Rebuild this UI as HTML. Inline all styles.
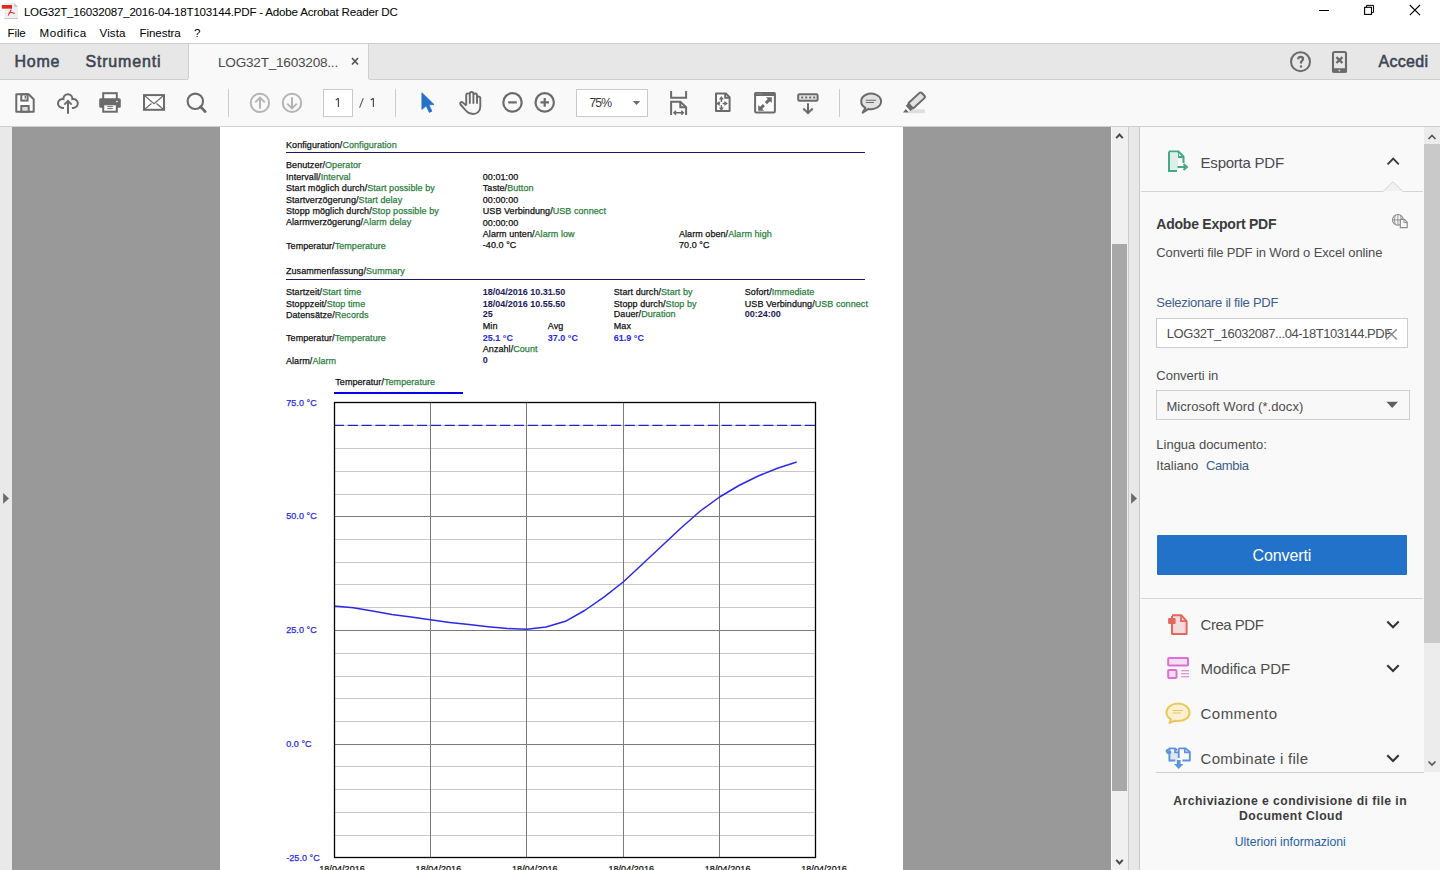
<!DOCTYPE html>
<html><head><meta charset="utf-8"><title>Acrobat</title>
<style>
html,body{margin:0;padding:0;}
body{width:1440px;height:870px;overflow:hidden;position:relative;background:#fff;font-family:"Liberation Sans",sans-serif;}
.t{position:absolute;white-space:nowrap;line-height:1;}
.r{position:absolute;display:block;}
</style></head><body>
<div class="r" style="left:0px;top:0px;width:1440px;height:43px;background:#fff;"></div>
<svg class="r" style="left:0px;top:0px" width="20" height="21" viewBox="0 0 20 21">
<path d="M4.4 3 H14.2 L18 6.8 V19 H4.4 Z" fill="#edf0f3"/>
<path d="M4.4 18.6 H18" stroke="#bdbdbd" stroke-width="0.9"/>
<path d="M14.2 3 L18 6.8 H14.2 Z" fill="#c4c4c4"/>
<rect x="1.8" y="5" width="10.2" height="3.7" fill="#e8261c"/>
<path d="M8.2 15.4 L11.3 9.6 M9.6 12.6 C11.5 12.2 13 12.6 14.8 13.5" fill="none" stroke="#e8261c" stroke-width="1.1"/>
</svg>
<div class="t" style="left:23.90px;top:6.00px;font-size:11.6px;color:#000;letter-spacing:-0.216px;">LOG32T_16032087_2016-04-18T103144.PDF - Adobe Acrobat Reader DC</div>
<div class="r" style="left:1319px;top:10px;width:10px;height:1px;background:#000;"></div>
<svg class="r" style="left:1360px;top:2px" width="20" height="16" viewBox="0 0 20 16">
<path d="M6.5 5.3 V3.4 H13.5 V10.4 H11.6" fill="none" stroke="#000" stroke-width="1"/>
<rect x="4.6" y="5.3" width="6.9" height="7.1" fill="none" stroke="#000" stroke-width="1.1"/>
</svg>
<svg class="r" style="left:1405px;top:1px" width="20" height="18" viewBox="0 0 20 18">
<path d="M4.8 4 L15 14.2 M15 4 L4.8 14.2" stroke="#000" stroke-width="1.1"/>
</svg>
<div class="t" style="left:7.60px;top:27.00px;font-size:11.6px;color:#000;letter-spacing:-0.173px;">File</div>
<div class="t" style="left:39.60px;top:27.00px;font-size:11.6px;color:#000;letter-spacing:0.476px;">Modifica</div>
<div class="t" style="left:99.60px;top:27.00px;font-size:11.6px;color:#000;letter-spacing:0.084px;">Vista</div>
<div class="t" style="left:139.60px;top:27.00px;font-size:11.6px;color:#000;letter-spacing:-0.113px;">Finestra</div>
<div class="t" style="left:194.00px;top:27.00px;font-size:11.6px;color:#000;letter-spacing:-0.452px;">?</div>
<div class="r" style="left:0px;top:43px;width:1440px;height:1px;background:#cdcdcd;"></div>
<div class="r" style="left:0px;top:44px;width:1440px;height:35px;background:#e7e7e7;"></div>
<div class="r" style="left:0px;top:79px;width:1440px;height:1px;background:#cfcfcf;"></div>
<div class="r" style="left:188px;top:44px;width:181px;height:36px;background:#f9f9f9;"></div>
<div class="r" style="left:188px;top:44px;width:1px;height:35px;background:#cfcfcf;"></div>
<div class="r" style="left:368px;top:44px;width:1px;height:35px;background:#cfcfcf;"></div>
<div class="t" style="left:14.60px;top:54.00px;font-size:16px;color:#3b4550;letter-spacing:0.680px;-webkit-text-stroke:0.55px currentColor;">Home</div>
<div class="t" style="left:85.40px;top:54.00px;font-size:16px;color:#3b4550;letter-spacing:0.837px;-webkit-text-stroke:0.55px currentColor;">Strumenti</div>
<div class="t" style="left:218.00px;top:56.00px;font-size:13.6px;color:#4b4b4b;letter-spacing:-0.235px;">LOG32T_1603208...</div>
<svg class="r" style="left:350px;top:57px" width="10" height="9" viewBox="0 0 10 9">
<path d="M2 1 L8 7.5 M8 1 L2 7.5" stroke="#555" stroke-width="1.7"/></svg>
<svg class="r" style="left:1289px;top:50px" width="24" height="24" viewBox="0 0 24 24">
<circle cx="11.5" cy="11.7" r="9.5" fill="none" stroke="#6a6a6a" stroke-width="2"/>
<path d="M9.2 9.3 C9.2 7.6 10.2 6.9 11.6 6.9 C13 6.9 14 7.7 14 9 C14 10.6 12 10.9 12 12.6 V13.4" fill="none" stroke="#6a6a6a" stroke-width="2.3"/>
<rect x="10.9" y="15.4" width="2.2" height="2.2" fill="#6a6a6a"/></svg>
<svg class="r" style="left:1331px;top:50px" width="18" height="24" viewBox="0 0 18 24">
<rect x="2" y="2" width="13" height="19.6" rx="1.6" fill="none" stroke="#6a6a6a" stroke-width="2.1"/>
<rect x="1" y="18.2" width="15" height="4.6" rx="1" fill="#6a6a6a"/>
<rect x="7.7" y="19.8" width="1.5" height="1.5" fill="#e7e7e7"/>
<path d="M5.4 7.2 L11.4 13 M11.4 7.2 L5.4 13" stroke="#6a6a6a" stroke-width="2.4"/></svg>
<div class="t" style="left:1378.60px;top:54.00px;font-size:16px;color:#3b4550;letter-spacing:0.263px;-webkit-text-stroke:0.55px currentColor;">Accedi</div>
<div class="r" style="left:0px;top:80px;width:1440px;height:46px;background:#f9f9f9;"></div>
<div class="r" style="left:0px;top:126px;width:1440px;height:1px;background:#cfcfcf;"></div>
<svg class="r" style="left:10px;top:88px" width="30" height="30" viewBox="10 88 30 30"><path d="M16.3 94.3 H28.6 L33.7 99.2 V111.7 H16.3 Z" fill="#fff" stroke="#6b6b6b" stroke-width="2" stroke-linejoin="round"/>
<rect x="21.3" y="94.3" width="6.3" height="6.3" fill="none" stroke="#6b6b6b" stroke-width="2"/>
<rect x="24.6" y="95.8" width="1.4" height="2.8" fill="#6b6b6b"/>
<rect x="21.3" y="106" width="7.4" height="5.7" fill="#dcdcdc" stroke="#6b6b6b" stroke-width="2"/></svg>
<svg class="r" style="left:52px;top:88px" width="32" height="30" viewBox="52 88 32 30"><path d="M64 107.9 H62.45 A4.45 4.45 0 1 1 63.42 99.11 A4.5 4.5 0 1 1 72.38 99.11 A4.45 4.45 0 1 1 73.35 107.9 H71.9" fill="none" stroke="#6b6b6b" stroke-width="2"/>
<path d="M68 113.8 V101 M64.3 104.6 L68 100.9 L71.7 104.6" fill="none" stroke="#6b6b6b" stroke-width="2"/></svg>
<svg class="r" style="left:95px;top:88px" width="30" height="30" viewBox="95 88 30 30"><rect x="103.2" y="93.2" width="13.6" height="7" fill="#fff" stroke="#6b6b6b" stroke-width="2"/>
<rect x="99.2" y="98.3" width="21.6" height="9.4" rx="1.5" fill="#6b6b6b"/>
<rect x="116" y="100.9" width="2" height="1.2" fill="#ddd"/>
<rect x="103.2" y="104.3" width="13.6" height="7.4" fill="#fff" stroke="#6b6b6b" stroke-width="2"/>
<path d="M107.2 106.6 H112.8 M107.2 108.6 H112.8" stroke="#6b6b6b" stroke-width="1"/></svg>
<svg class="r" style="left:140px;top:88px" width="30" height="30" viewBox="140 88 30 30"><rect x="144" y="95.1" width="20" height="14.7" fill="#fff" stroke="#6b6b6b" stroke-width="2"/>
<path d="M145 96 L154 103.8 L163 96 M145 109 L151.5 103.5 M163 109 L156.5 103.5" fill="none" stroke="#6b6b6b" stroke-width="1.2"/></svg>
<svg class="r" style="left:182px;top:88px" width="30" height="30" viewBox="182 88 30 30"><circle cx="195.3" cy="101.3" r="7.7" fill="none" stroke="#6b6b6b" stroke-width="2.1"/>
<path d="M200.6 106.8 L205.2 111.6" stroke="#6b6b6b" stroke-width="2.8" stroke-linecap="round"/></svg>
<div class="r" style="left:228px;top:89px;width:1px;height:28px;background:#cccccc;"></div>
<svg class="r" style="left:245px;top:88px" width="65" height="30" viewBox="245 88 65 30"><circle cx="259.9" cy="102.9" r="9.2" fill="none" stroke="#b4b4b4" stroke-width="2"/>
<path d="M260 108.8 V97.8 M255.2 102.4 L260 97.6 L264.8 102.4" fill="none" stroke="#b4b4b4" stroke-width="2"/>
<circle cx="292" cy="102.9" r="9.2" fill="none" stroke="#b4b4b4" stroke-width="2"/>
<path d="M292 97.2 V108.2 M287.2 103.6 L292 108.4 L296.8 103.6" fill="none" stroke="#b4b4b4" stroke-width="2"/></svg>
<div class="r" style="left:323px;top:89px;width:30px;height:28px;background:#fff;box-sizing:border-box;border:1px solid #c9c9c9;"></div>
<svg class="r" style="left:330px;top:94px" width="50" height="16" viewBox="330 94 50 16"><path d="M338.4 98.3 V107 M338.4 98.3 L335.8 100" fill="none" stroke="#454545" stroke-width="1.15"/><path d="M359.6 107.6 L363.3 98.2" stroke="#555" stroke-width="1.1"/><path d="M373.4 98.3 V107 M373.4 98.3 L370.8 100" fill="none" stroke="#454545" stroke-width="1.15"/></svg>
<div class="r" style="left:395px;top:89px;width:1px;height:28px;background:#cccccc;"></div>
<svg class="r" style="left:415px;top:88px" width="25" height="30" viewBox="415 88 25 30"><path d="M421.9 92.7 V109.4 L426.2 105.8 L429.3 112.4 L431.9 111.2 L428.9 104.8 L434 104.5 Z" fill="#2671c9" stroke="#2671c9" stroke-width="0.8" stroke-linejoin="round"/></svg>
<svg class="r" style="left:455px;top:88px" width="30" height="30" viewBox="455 88 30 30"><path d="M466.2 105.5 V95.2 A1.8 1.8 0 0 1 469.8 95.2 V103 V93.8 A1.8 1.8 0 0 1 473.4 93.8 V103 V95.3 A1.8 1.8 0 0 1 477 95.3 V103 V97.6 A1.8 1.8 0 0 1 480.3 97.6 V106.5 C480.3 111.5 477 114 473 114 C469.5 114 467.5 112.5 465.8 110.5 L460.5 104.5 C459.5 103.2 460.8 101.4 462.6 102.4 L466.2 105.5" fill="none" stroke="#6b6b6b" stroke-width="1.9" stroke-linejoin="round"/></svg>
<svg class="r" style="left:500px;top:88px" width="60" height="30" viewBox="500 88 60 30"><circle cx="512.5" cy="102.4" r="9.2" fill="none" stroke="#6b6b6b" stroke-width="2.2"/>
<path d="M508.2 102.4 H516.8" stroke="#6b6b6b" stroke-width="2.2"/>
<circle cx="544.7" cy="102.4" r="9.2" fill="none" stroke="#6b6b6b" stroke-width="2.2"/>
<path d="M540.4 102.4 H549 M544.7 98.1 V106.7" stroke="#6b6b6b" stroke-width="2.2"/></svg>
<div class="r" style="left:576px;top:89px;width:72px;height:28px;background:#fff;box-sizing:border-box;border:1px solid #c9c9c9;"></div>
<div class="t" style="left:589.40px;top:97.00px;font-size:12.2px;color:#3a3a3a;letter-spacing:-0.906px;">75%</div>
<svg class="r" style="left:630px;top:98px" width="12" height="9" viewBox="630 98 12 9"><path d="M632.8 101 H640.2 L636.5 105.1 Z" fill="#6b6b6b"/></svg>
<svg class="r" style="left:665px;top:88px" width="28" height="30" viewBox="665 88 28 30"><path d="M671.1 91 V97.8 H686.1 V91" fill="none" stroke="#6b6b6b" stroke-width="2"/>
<path d="M671.1 114.9 V101.8 H680.3 L686.1 107.3 V114.9" fill="none" stroke="#6b6b6b" stroke-width="2"/>
<path d="M680.3 101.8 V107.3 H686.1" fill="none" stroke="#6b6b6b" stroke-width="2"/>
<path d="M674 112.7 H683.3 M676 110.7 L674 112.7 L676 114.7 M681.3 110.7 L683.3 112.7 L681.3 114.7" fill="none" stroke="#6b6b6b" stroke-width="1.5"/></svg>
<svg class="r" style="left:710px;top:88px" width="26" height="30" viewBox="710 88 26 30"><path d="M716 93.4 H725.8 L729.6 97.2 V111.1 H716 Z" fill="#fff" stroke="#6b6b6b" stroke-width="2" stroke-linejoin="round"/>
<path d="M725.2 93.4 V97.8 H729.6" fill="none" stroke="#6b6b6b" stroke-width="2"/>
<path d="M721.4 99 V102 M721.4 105 V108 M718.8 103.5 H720.2 M722.6 103.5 H725" stroke="#6b6b6b" stroke-width="1.5"/>
<path d="M718.9 99.6 L721.4 96.1 L723.9 99.6 Z M718.9 107.4 L721.4 110.9 L723.9 107.4 Z M719.6 101 L716.1 103.5 L719.6 106 Z M724.4 101 L727.9 103.5 L724.4 106 Z" fill="#6b6b6b"/></svg>
<svg class="r" style="left:750px;top:88px" width="30" height="30" viewBox="750 88 30 30"><rect x="755.1" y="93.1" width="19.8" height="19.4" rx="1.3" fill="#fff" stroke="#6b6b6b" stroke-width="2"/>
<rect x="754.4" y="92.2" width="21.2" height="3.8" rx="1.2" fill="#6b6b6b"/>
<path d="M756.6 93.9 H757.6 M758.6 93.9 H759.6 M760.6 93.9 H761.6" stroke="#c4c4c4" stroke-width="0.8"/>
<path d="M769.4 99.6 L765.9 103.1 M760.4 108.6 L763.9 105.1" stroke="#6b6b6b" stroke-width="3"/>
<path d="M765.9 97.2 H771.8 V103.1 Z M758.2 104.9 V110.8 H764.1 Z" fill="#6b6b6b"/></svg>
<svg class="r" style="left:793px;top:88px" width="30" height="30" viewBox="793 88 30 30"><rect x="798.2" y="94.2" width="19.4" height="6.6" rx="1.2" fill="#e4e4e4" stroke="#6b6b6b" stroke-width="2"/>
<path d="M801.2 97.4 H803.2 M805.2 97.4 H807.2 M809.2 97.4 H811.2 M813.2 97.4 H815.2" stroke="#6b6b6b" stroke-width="2"/>
<path d="M808 103.2 V113 M803.3 108.5 L808 113.2 L812.7 108.5" fill="none" stroke="#6b6b6b" stroke-width="2"/></svg>
<div class="r" style="left:839px;top:89px;width:1px;height:28px;background:#cccccc;"></div>
<svg class="r" style="left:855px;top:88px" width="32" height="30" viewBox="855 88 32 30"><path d="M865.5 107.8 A9.95 7.8 0 1 1 868.5 108.9 L862.7 112.6 Z" fill="#e2e2e2" stroke="#6b6b6b" stroke-width="2" stroke-linejoin="round"/>
<path d="M865.8 100.2 H876 M865.8 102.5 H874" stroke="#6b6b6b" stroke-width="1.1"/></svg>
<svg class="r" style="left:900px;top:88px" width="28" height="30" viewBox="900 88 28 30"><rect x="909" y="109.3" width="15.7" height="3.9" fill="#dedede"/>
<g transform="translate(915.8,101.2) rotate(-43)">
<rect x="-7.5" y="-3.6" width="17.5" height="7.2" rx="2" fill="#e2e2e2" stroke="#6b6b6b" stroke-width="2"/>
<rect x="-10.5" y="-3.6" width="4.5" height="7.2" fill="#6b6b6b"/>
</g>
<path d="M903 112.6 L905.8 109 L909 112.6 Z" fill="#6b6b6b"/></svg>
<div class="r" style="left:0px;top:127px;width:12px;height:743px;background:#e9e9e9;"></div>
<svg class="r" style="left:0px;top:488px" width="12" height="20" viewBox="0 488 12 20"><path d="M3.1 493 L9 498.4 L3.1 503.8 Z" fill="#6b6b6b"/></svg>
<div class="r" style="left:12px;top:127px;width:1099px;height:743px;background:#999999;"></div>
<div class="r" style="left:220px;top:127px;width:683px;height:743px;background:#ffffff;"></div>
<div class="r" style="left:1111px;top:127px;width:17px;height:743px;background:#f0f0f0;"></div>
<div class="r" style="left:1111px;top:127px;width:1px;height:743px;background:#fafafa;"></div>
<div class="r" style="left:1112px;top:244px;width:15px;height:547px;background:#a8a8a8;"></div>
<svg class="r" style="left:1111px;top:127px" width="17" height="18" viewBox="1111 127 17 18"><path d="M1116.2 138.2 L1119.5 134.5 L1122.8 138.2" fill="none" stroke="#4a4a4a" stroke-width="2"/></svg>
<svg class="r" style="left:1111px;top:852px" width="17" height="18" viewBox="1111 852 17 18"><path d="M1116.2 859.8 L1119.5 863.5 L1122.8 859.8" fill="none" stroke="#4a4a4a" stroke-width="2"/></svg>
<div class="r" style="left:1128px;top:127px;width:1px;height:743px;background:#cacaca;"></div>
<div class="r" style="left:1129px;top:127px;width:10px;height:743px;background:#e8e8e8;"></div>
<svg class="r" style="left:1129px;top:488px" width="11" height="20" viewBox="1129 488 11 20"><path d="M1131.1 493 L1137 498.4 L1131.1 503.8 Z" fill="#6b6b6b"/></svg>
<div class="r" style="left:1139px;top:127px;width:1px;height:743px;background:#c8c8c8;"></div>
<div class="r" style="left:1140px;top:127px;width:300px;height:743px;background:#f9f9f9;"></div>
<div class="t" style="left:286.00px;top:141.00px;font-size:9px;color:#111;-webkit-text-stroke:0.25px currentColor;letter-spacing:0.06px;">Konfiguration/<span style="color:#2e8040">Configuration</span></div>
<div class="r" style="left:286px;top:152px;width:579px;height:1px;background:#1a1a5a;height:1.4px;"></div>
<div class="t" style="left:286.00px;top:161.00px;font-size:9px;color:#111;-webkit-text-stroke:0.25px currentColor;letter-spacing:0.06px;">Benutzer/<span style="color:#2e8040">Operator</span></div>
<div class="t" style="left:286.00px;top:173.00px;font-size:9px;color:#111;-webkit-text-stroke:0.25px currentColor;letter-spacing:0.06px;">Intervall/<span style="color:#2e8040">Interval</span></div>
<div class="t" style="left:286.00px;top:184.00px;font-size:9px;color:#111;-webkit-text-stroke:0.25px currentColor;letter-spacing:0.06px;">Start möglich durch/<span style="color:#2e8040">Start possible by</span></div>
<div class="t" style="left:286.00px;top:196.00px;font-size:9px;color:#111;-webkit-text-stroke:0.25px currentColor;letter-spacing:0.06px;">Startverzögerung/<span style="color:#2e8040">Start delay</span></div>
<div class="t" style="left:286.00px;top:207.00px;font-size:9px;color:#111;-webkit-text-stroke:0.25px currentColor;letter-spacing:0.06px;">Stopp möglich durch/<span style="color:#2e8040">Stop possible by</span></div>
<div class="t" style="left:286.00px;top:218.00px;font-size:9px;color:#111;-webkit-text-stroke:0.25px currentColor;letter-spacing:0.06px;">Alarmverzögerung/<span style="color:#2e8040">Alarm delay</span></div>
<div class="t" style="left:286.00px;top:242.00px;font-size:9px;color:#111;-webkit-text-stroke:0.25px currentColor;letter-spacing:0.06px;">Temperatur/<span style="color:#2e8040">Temperature</span></div>
<div class="t" style="left:482.80px;top:173.00px;font-size:9px;color:#111;-webkit-text-stroke:0.25px currentColor;letter-spacing:0.06px;">00:01:00</div>
<div class="t" style="left:482.80px;top:184.00px;font-size:9px;color:#111;-webkit-text-stroke:0.25px currentColor;letter-spacing:0.06px;">Taste/<span style="color:#2e8040">Button</span></div>
<div class="t" style="left:482.80px;top:196.00px;font-size:9px;color:#111;-webkit-text-stroke:0.25px currentColor;letter-spacing:0.06px;">00:00:00</div>
<div class="t" style="left:482.80px;top:207.00px;font-size:9px;color:#111;-webkit-text-stroke:0.25px currentColor;letter-spacing:0.06px;">USB Verbindung/<span style="color:#2e8040">USB connect</span></div>
<div class="t" style="left:482.80px;top:219.00px;font-size:9px;color:#111;-webkit-text-stroke:0.25px currentColor;letter-spacing:0.06px;">00:00:00</div>
<div class="t" style="left:482.80px;top:230.00px;font-size:9px;color:#111;-webkit-text-stroke:0.25px currentColor;letter-spacing:0.06px;">Alarm unten/<span style="color:#2e8040">Alarm low</span></div>
<div class="t" style="left:482.80px;top:241.00px;font-size:9px;color:#111;-webkit-text-stroke:0.25px currentColor;letter-spacing:0.06px;">-40.0 °C</div>
<div class="t" style="left:679.00px;top:230.00px;font-size:9px;color:#111;-webkit-text-stroke:0.25px currentColor;letter-spacing:0.06px;">Alarm oben/<span style="color:#2e8040">Alarm high</span></div>
<div class="t" style="left:679.00px;top:241.00px;font-size:9px;color:#111;-webkit-text-stroke:0.25px currentColor;letter-spacing:0.06px;">70.0 °C</div>
<div class="t" style="left:286.00px;top:267.00px;font-size:9px;color:#111;-webkit-text-stroke:0.25px currentColor;letter-spacing:0.06px;">Zusammenfassung/<span style="color:#2e8040">Summary</span></div>
<div class="r" style="left:286px;top:279px;width:579px;height:1px;background:#1a1a5a;height:1.4px;"></div>
<div class="t" style="left:286.00px;top:288.00px;font-size:9px;color:#111;-webkit-text-stroke:0.25px currentColor;letter-spacing:0.06px;">Startzeit/<span style="color:#2e8040">Start time</span></div>
<div class="t" style="left:286.00px;top:300.00px;font-size:9px;color:#111;-webkit-text-stroke:0.25px currentColor;letter-spacing:0.06px;">Stoppzeit/<span style="color:#2e8040">Stop time</span></div>
<div class="t" style="left:286.00px;top:311.00px;font-size:9px;color:#111;-webkit-text-stroke:0.25px currentColor;letter-spacing:0.06px;">Datensätze/<span style="color:#2e8040">Records</span></div>
<div class="t" style="left:286.00px;top:334.00px;font-size:9px;color:#111;-webkit-text-stroke:0.25px currentColor;letter-spacing:0.06px;">Temperatur/<span style="color:#2e8040">Temperature</span></div>
<div class="t" style="left:286.00px;top:357.00px;font-size:9px;color:#111;-webkit-text-stroke:0.25px currentColor;letter-spacing:0.06px;">Alarm/<span style="color:#2e8040">Alarm</span></div>
<div class="t" style="left:482.80px;top:288.00px;font-size:9px;color:#1c1c5a;font-weight:bold;-webkit-text-stroke:0.05px currentColor;">18/04/2016 10.31.50</div>
<div class="t" style="left:482.80px;top:300.00px;font-size:9px;color:#1c1c5a;font-weight:bold;-webkit-text-stroke:0.05px currentColor;">18/04/2016 10.55.50</div>
<div class="t" style="left:482.80px;top:310.00px;font-size:9px;color:#1c1c5a;font-weight:bold;-webkit-text-stroke:0.05px currentColor;">25</div>
<div class="t" style="left:482.80px;top:322.00px;font-size:9px;color:#111;-webkit-text-stroke:0.25px currentColor;letter-spacing:0.06px;">Min</div>
<div class="t" style="left:547.80px;top:322.00px;font-size:9px;color:#111;-webkit-text-stroke:0.25px currentColor;letter-spacing:0.06px;">Avg</div>
<div class="t" style="left:613.80px;top:322.00px;font-size:9px;color:#111;-webkit-text-stroke:0.25px currentColor;letter-spacing:0.06px;">Max</div>
<div class="t" style="left:482.80px;top:334.00px;font-size:9px;color:#2a2ae6;font-weight:bold;-webkit-text-stroke:0.05px currentColor;">25.1 °C</div>
<div class="t" style="left:547.80px;top:334.00px;font-size:9px;color:#2a2ae6;font-weight:bold;-webkit-text-stroke:0.05px currentColor;">37.0 °C</div>
<div class="t" style="left:613.80px;top:334.00px;font-size:9px;color:#2a2ae6;font-weight:bold;-webkit-text-stroke:0.05px currentColor;">61.9 °C</div>
<div class="t" style="left:482.80px;top:345.00px;font-size:9px;color:#111;-webkit-text-stroke:0.25px currentColor;letter-spacing:0.06px;">Anzahl/<span style="color:#2e8040">Count</span></div>
<div class="t" style="left:482.80px;top:356.00px;font-size:9px;color:#1c1c5a;font-weight:bold;-webkit-text-stroke:0.05px currentColor;">0</div>
<div class="t" style="left:613.80px;top:288.00px;font-size:9px;color:#111;-webkit-text-stroke:0.25px currentColor;letter-spacing:0.06px;">Start durch/<span style="color:#2e8040">Start by</span></div>
<div class="t" style="left:613.80px;top:300.00px;font-size:9px;color:#111;-webkit-text-stroke:0.25px currentColor;letter-spacing:0.06px;">Stopp durch/<span style="color:#2e8040">Stop by</span></div>
<div class="t" style="left:613.80px;top:310.00px;font-size:9px;color:#111;-webkit-text-stroke:0.25px currentColor;letter-spacing:0.06px;">Dauer/<span style="color:#2e8040">Duration</span></div>
<div class="t" style="left:744.80px;top:288.00px;font-size:9px;color:#111;-webkit-text-stroke:0.25px currentColor;letter-spacing:0.06px;">Sofort/<span style="color:#2e8040">Immediate</span></div>
<div class="t" style="left:744.80px;top:300.00px;font-size:9px;color:#111;-webkit-text-stroke:0.25px currentColor;letter-spacing:0.06px;">USB Verbindung/<span style="color:#2e8040">USB connect</span></div>
<div class="t" style="left:744.80px;top:310.00px;font-size:9px;color:#1c1c5a;font-weight:bold;-webkit-text-stroke:0.05px currentColor;">00:24:00</div>
<div class="t" style="left:335.30px;top:378.00px;font-size:9px;color:#111;-webkit-text-stroke:0.25px currentColor;letter-spacing:0.06px;">Temperatur/<span style="color:#2e8040">Temperature</span></div>
<div class="r" style="left:334px;top:392px;width:129px;height:2px;background:#0000ee;"></div>
<div class="t" style="left:286.20px;top:399.00px;font-size:9px;color:#2a2ae6;-webkit-text-stroke:0.25px currentColor;letter-spacing:0.06px;">75.0 °C</div>
<div class="t" style="left:286.20px;top:512.00px;font-size:9px;color:#2a2ae6;-webkit-text-stroke:0.25px currentColor;letter-spacing:0.06px;">50.0 °C</div>
<div class="t" style="left:286.20px;top:626.00px;font-size:9px;color:#2a2ae6;-webkit-text-stroke:0.25px currentColor;letter-spacing:0.06px;">25.0 °C</div>
<div class="t" style="left:286.20px;top:740.00px;font-size:9px;color:#2a2ae6;-webkit-text-stroke:0.25px currentColor;letter-spacing:0.06px;">0.0 °C</div>
<div class="t" style="left:286.20px;top:854.00px;font-size:9px;color:#2a2ae6;-webkit-text-stroke:0.25px currentColor;letter-spacing:0.06px;">-25.0 °C</div>
<svg class="r" style="left:220px;top:127px" width="683" height="743" viewBox="220 127 683 743"><path d="M334.5 425.5 H815.5" stroke="#c8c8c8" stroke-width="1"/><path d="M334.5 448.5 H815.5" stroke="#c8c8c8" stroke-width="1"/><path d="M334.5 471.5 H815.5" stroke="#c8c8c8" stroke-width="1"/><path d="M334.5 494.5 H815.5" stroke="#c8c8c8" stroke-width="1"/><path d="M334.5 539.5 H815.5" stroke="#c8c8c8" stroke-width="1"/><path d="M334.5 562.5 H815.5" stroke="#c8c8c8" stroke-width="1"/><path d="M334.5 584.5 H815.5" stroke="#c8c8c8" stroke-width="1"/><path d="M334.5 607.5 H815.5" stroke="#c8c8c8" stroke-width="1"/><path d="M334.5 653.5 H815.5" stroke="#c8c8c8" stroke-width="1"/><path d="M334.5 676.5 H815.5" stroke="#c8c8c8" stroke-width="1"/><path d="M334.5 698.5 H815.5" stroke="#c8c8c8" stroke-width="1"/><path d="M334.5 721.5 H815.5" stroke="#c8c8c8" stroke-width="1"/><path d="M334.5 766.5 H815.5" stroke="#c8c8c8" stroke-width="1"/><path d="M334.5 789.5 H815.5" stroke="#c8c8c8" stroke-width="1"/><path d="M334.5 812.5 H815.5" stroke="#c8c8c8" stroke-width="1"/><path d="M334.5 835.5 H815.5" stroke="#c8c8c8" stroke-width="1"/><path d="M334.5 516.5 H815.5" stroke="#7a7a7a" stroke-width="1"/><path d="M334.5 630.5 H815.5" stroke="#7a7a7a" stroke-width="1"/><path d="M334.5 744.5 H815.5" stroke="#7a7a7a" stroke-width="1"/><path d="M430.5 402.5 V857.5" stroke="#7a7a7a" stroke-width="1"/><path d="M526.5 402.5 V857.5" stroke="#7a7a7a" stroke-width="1"/><path d="M623.5 402.5 V857.5" stroke="#7a7a7a" stroke-width="1"/><path d="M719.5 402.5 V857.5" stroke="#7a7a7a" stroke-width="1"/><path d="M334.5 425.3 H815.5" stroke="#2222c8" stroke-width="1.3" stroke-dasharray="10.1 3.75" stroke-dashoffset="0.6"/><polyline points="334.0,606.0 353.3,607.7 372.6,611.0 391.8,614.5 411.1,617.0 430.4,619.8 449.7,622.4 469.0,624.6 488.2,626.8 507.5,628.6 526.8,629.2 546.1,627.0 565.4,621.3 584.6,610.5 603.9,597.1 623.2,582.0 642.5,564.0 661.8,546.0 681.0,528.0 700.3,511.0 719.6,497.0 738.9,485.5 758.2,476.0 777.4,468.2 796.7,462.0" fill="none" stroke="#2a2ae6" stroke-width="1.5" stroke-linejoin="round"/><rect x="334.5" y="402.5" width="481.0" height="455.0" fill="none" stroke="#000" stroke-width="1.3"/></svg>
<div class="t" style="left:319.20px;top:865.00px;font-size:9px;color:#111;-webkit-text-stroke:0.25px currentColor;letter-spacing:0.06px;">18/04/2016</div>
<div class="t" style="left:415.60px;top:865.00px;font-size:9px;color:#111;-webkit-text-stroke:0.25px currentColor;letter-spacing:0.06px;">18/04/2016</div>
<div class="t" style="left:512.00px;top:865.00px;font-size:9px;color:#111;-webkit-text-stroke:0.25px currentColor;letter-spacing:0.06px;">18/04/2016</div>
<div class="t" style="left:608.40px;top:865.00px;font-size:9px;color:#111;-webkit-text-stroke:0.25px currentColor;letter-spacing:0.06px;">18/04/2016</div>
<div class="t" style="left:704.80px;top:865.00px;font-size:9px;color:#111;-webkit-text-stroke:0.25px currentColor;letter-spacing:0.06px;">18/04/2016</div>
<div class="t" style="left:801.20px;top:865.00px;font-size:9px;color:#111;-webkit-text-stroke:0.25px currentColor;letter-spacing:0.06px;">18/04/2016</div>
<div class="r" style="left:1424px;top:127px;width:16px;height:645px;background:#ececec;"></div>
<div class="r" style="left:1424px;top:144px;width:16px;height:499px;background:#c9c9c9;"></div>
<svg class="r" style="left:1424px;top:127px" width="16" height="16" viewBox="1424 127 16 16"><path d="M1428.5 139 L1432 135.5 L1435.5 139" fill="none" stroke="#555" stroke-width="1.6"/></svg>
<svg class="r" style="left:1424px;top:755px" width="16" height="16" viewBox="1424 755 16 16"><path d="M1428.5 761.5 L1432 765 L1435.5 761.5" fill="none" stroke="#555" stroke-width="1.6"/></svg>
<svg class="r" style="left:1164px;top:146px" width="28" height="30" viewBox="1164 146 28 30"><path d="M1169 151.5 H1178.5 L1183.5 156.5 V163" fill="none" stroke="#46a985" stroke-width="2" stroke-linejoin="round"/>
<path d="M1169 151.5 V171 H1177" fill="none" stroke="#46a985" stroke-width="2"/>
<path d="M1178 151.5 V157 H1183.5" fill="none" stroke="#46a985" stroke-width="1.8"/>
<rect x="1170" y="152.5" width="8" height="17.5" fill="#dfeee8"/>
<path d="M1177.5 167 H1186.5 M1183.5 164 L1186.8 167 L1183.5 170" fill="none" stroke="#46a985" stroke-width="2.2"/></svg>
<div class="t" style="left:1200.60px;top:155.00px;font-size:15px;color:#4a4a50;letter-spacing:-0.233px;">Esporta PDF</div>
<svg class="r" style="left:1382px;top:154px" width="20" height="14" viewBox="1382 154 20 14"><path d="M1387.6 164.3 L1393.2 158.7 L1398.8 164.3" fill="none" stroke="#3a3a3a" stroke-width="1.9"/></svg>
<div class="r" style="left:1141px;top:191px;width:282px;height:1px;background:#d4d4d4;"></div>
<svg class="r" style="left:1380px;top:178px" width="26" height="16" viewBox="1380 178 26 16"><path d="M1383 191.5 L1393 181.8 L1403 191.5" fill="#f1f1f1" stroke="#d4d4d4" stroke-width="1"/><rect x="1383.5" y="191" width="19" height="2" fill="#f8f8f8"/></svg>
<div class="t" style="left:1156.30px;top:217.00px;font-size:14px;color:#3c3c3c;font-weight:bold;letter-spacing:-0.230px;">Adobe Export PDF</div>
<svg class="r" style="left:1389px;top:212px" width="22" height="20" viewBox="1389 212 22 20"><circle cx="1397.9" cy="219.9" r="5.4" fill="#f8f8f8" stroke="#8c8c8c" stroke-width="1.1"/>
<path d="M1392.5 219.9 H1403.3 M1397.9 214.5 V225.3 M1395.6 215 C1394.2 218 1394.2 221.8 1395.6 224.8 M1400.2 215 C1401.6 218 1401.6 221.8 1400.2 224.8" fill="none" stroke="#8c8c8c" stroke-width="0.9"/>
<path d="M1400.3 219.4 H1404.4 L1407.2 222.2 V227.7 H1400.3 Z" fill="#f8f8f8" stroke="#8c8c8c" stroke-width="1.2" stroke-linejoin="round"/>
<path d="M1404 219.4 V222.6 H1407.2" fill="none" stroke="#8c8c8c" stroke-width="1"/></svg>
<div class="t" style="left:1156.30px;top:246.00px;font-size:13px;color:#4d4d4d;letter-spacing:-0.124px;">Converti file PDF in Word o Excel online</div>
<div class="t" style="left:1156.30px;top:296.00px;font-size:13px;color:#3e5e8c;letter-spacing:-0.265px;">Selezionare il file PDF</div>
<div class="r" style="left:1156px;top:318px;width:252px;height:30px;background:#ffffff;box-sizing:border-box;border:1px solid #cccccc;"></div>
<div class="t" style="left:1166.80px;top:327.00px;font-size:13px;color:#4d4d4d;letter-spacing:-0.440px;">LOG32T_16032087...04-18T103144.PDF</div>
<svg class="r" style="left:1383px;top:326px" width="17" height="17" viewBox="1383 326 17 17"><path d="M1386.3 329.2 L1396.8 339.5 M1396.8 329.2 L1386.3 339.5" stroke="#8a8a8a" stroke-width="1.4"/></svg>
<div class="t" style="left:1156.30px;top:369.00px;font-size:13px;color:#4d4d4d;letter-spacing:-0.013px;">Converti in</div>
<div class="r" style="left:1156px;top:390px;width:254px;height:30px;background:#f8f8f8;box-sizing:border-box;border:1px solid #cfcfcf;"></div>
<div class="t" style="left:1166.40px;top:400.00px;font-size:13px;color:#4d4d4d;letter-spacing:0.062px;">Microsoft Word (*.docx)</div>
<svg class="r" style="left:1383px;top:398px" width="18" height="14" viewBox="1383 398 18 14"><path d="M1386.4 401.8 H1398 L1392.2 408 Z" fill="#5e5e5e"/></svg>
<div class="t" style="left:1156.30px;top:438.00px;font-size:13px;color:#4d4d4d;letter-spacing:-0.005px;">Lingua documento:</div>
<div class="t" style="left:1156.30px;top:459.00px;font-size:13px;color:#4d4d4d;letter-spacing:0.010px;">Italiano</div>
<div class="t" style="left:1206.00px;top:459.00px;font-size:13px;color:#3e5e8c;letter-spacing:-0.383px;">Cambia</div>
<div class="r" style="left:1157px;top:535px;width:250px;height:40px;background:#2272c9;border-radius:1px;"></div>
<div class="t" style="left:1252.60px;top:548.00px;font-size:16px;color:#fff;letter-spacing:-0.122px;">Converti</div>
<div class="r" style="left:1141px;top:598px;width:282px;height:1px;background:#d8d8d8;"></div>
<svg class="r" style="left:1164px;top:610px" width="28" height="30" viewBox="1164 610 28 30"><path d="M1172 616 V633.9 H1186.6 V621.2 L1181.2 615.2 H1172" fill="#f5dcdc" stroke="#e4665f" stroke-width="2" stroke-linejoin="round"/>
<path d="M1181 615.2 V621.2 H1186.6" fill="none" stroke="#e4665f" stroke-width="1.8"/>
<rect x="1168.1" y="617.9" width="7.5" height="6" rx="1" fill="#e4665f"/></svg>
<div class="t" style="left:1200.60px;top:617.00px;font-size:15px;color:#4d4d4d;letter-spacing:-0.485px;">Crea PDF</div>
<svg class="r" style="left:1382px;top:616px" width="20" height="16" viewBox="1382 616 20 16"><path d="M1387.3 621.5 L1393 627.2 L1398.7 621.5" fill="none" stroke="#333" stroke-width="2.1"/></svg>
<svg class="r" style="left:1164px;top:654px" width="28" height="28" viewBox="1164 654 28 28"><rect x="1168.2" y="658" width="19.8" height="7.6" rx="0.8" fill="#f5e0f3" stroke="#dd6fd6" stroke-width="2"/>
<rect x="1168.2" y="669.9" width="8.3" height="8.1" rx="0.8" fill="#f5e0f3" stroke="#dd6fd6" stroke-width="2"/>
<path d="M1181.1 670.8 H1189 M1181.1 673.8 H1189 M1181.1 676.8 H1189" stroke="#dd6fd6" stroke-width="1.1"/></svg>
<div class="t" style="left:1200.60px;top:661.00px;font-size:15px;color:#4d4d4d;letter-spacing:-0.044px;">Modifica PDF</div>
<svg class="r" style="left:1382px;top:660px" width="20" height="16" viewBox="1382 660 20 16"><path d="M1387.3 665.3 L1393 671 L1398.7 665.3" fill="none" stroke="#333" stroke-width="2.1"/></svg>
<svg class="r" style="left:1163px;top:700px" width="30" height="28" viewBox="1163 700 30 28"><path d="M1171 719.2 C1167.5 717.5 1166.5 715 1166.5 712.5 C1166.5 707 1172 703.5 1178 703.5 C1184 703.5 1189.5 707 1189.5 712.5 C1189.5 718 1184 721 1178 721 C1176.5 721 1175.5 720.9 1174.8 720.7 L1169.5 723.2 Z" fill="#fbf0cf" stroke="#eac95a" stroke-width="2" stroke-linejoin="round"/>
<path d="M1172.5 710.5 H1183 M1172.5 713 H1181" stroke="#eac95a" stroke-width="1"/></svg>
<div class="t" style="left:1200.60px;top:706.00px;font-size:15px;color:#4d4d4d;letter-spacing:0.442px;">Commento</div>
<svg class="r" style="left:1163px;top:744px" width="30" height="28" viewBox="1163 744 30 28"><rect x="1170" y="752" width="8" height="8" fill="#e3e6f3"/>
<path d="M1175.3 760.5 H1169.4 V753.8" fill="none" stroke="#5b93e0" stroke-width="1.9"/>
<path d="M1166.5 751.8 C1166.5 750.2 1168 749.5 1169.5 749.5 V748.4 H1175 L1177 750.2" fill="none" stroke="#5b93e0" stroke-width="1.9"/>
<rect x="1166.3" y="750.5" width="5" height="3.4" rx="1.4" fill="#5b93e0"/>
<path d="M1175 748.4 V752.4 H1178.7" fill="none" stroke="#5b93e0" stroke-width="1.7"/>
<path d="M1178.7 748.4 V758" stroke="#5b93e0" stroke-width="1.9"/>
<path d="M1178.7 748.4 H1185.6 L1189.8 752 V760.5 H1182.4" fill="none" stroke="#5b93e0" stroke-width="1.9" stroke-linejoin="round"/>
<path d="M1184.8 748.4 V752.4 H1189.8" fill="none" stroke="#5b93e0" stroke-width="1.7"/>
<rect x="1176.8" y="760" width="3.8" height="4.5" fill="#5b93e0"/>
<path d="M1174 764 H1183.4 L1178.7 768.9 Z" fill="#5b93e0"/></svg>
<div class="t" style="left:1200.60px;top:751.00px;font-size:15px;color:#4d4d4d;letter-spacing:0.270px;">Combinate i file</div>
<svg class="r" style="left:1382px;top:750px" width="20" height="16" viewBox="1382 750 20 16"><path d="M1387.3 755.3 L1393 761 L1398.7 755.3" fill="none" stroke="#333" stroke-width="2.1"/></svg>
<div class="r" style="left:1156px;top:772px;width:268px;height:1px;background:#cfcfcf;"></div>
<div class="t" style="left:1173.30px;top:795.00px;font-size:12.2px;color:#3c3c3c;font-weight:bold;letter-spacing:0.437px;">Archiviazione e condivisione di file in</div>
<div class="t" style="left:1239.00px;top:810.00px;font-size:12.2px;color:#3c3c3c;font-weight:bold;letter-spacing:0.457px;">Document Cloud</div>
<div class="t" style="left:1234.80px;top:836.00px;font-size:12.2px;color:#1f5ea8;letter-spacing:-0.009px;">Ulteriori informazioni</div>
</body></html>
